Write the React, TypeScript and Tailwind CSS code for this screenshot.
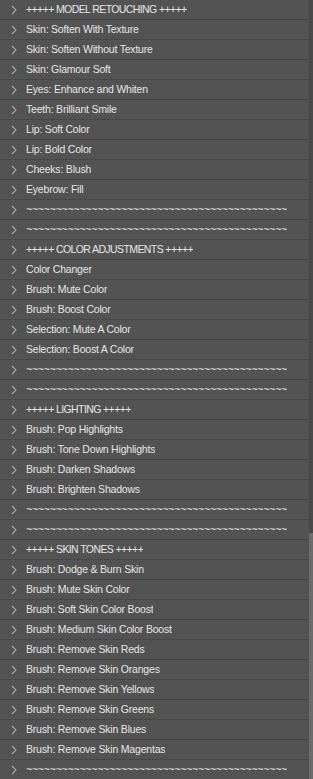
const TILDES = "~".repeat(44);

const rows: string[] = [
  "+++++ MODEL RETOUCHING +++++",
  "Skin: Soften With Texture",
  "Skin: Soften Without Texture",
  "Skin: Glamour Soft",
  "Eyes: Enhance and Whiten",
  "Teeth: Brilliant Smile",
  "Lip: Soft Color",
  "Lip: Bold Color",
  "Cheeks: Blush",
  "Eyebrow: Fill",
  TILDES,
  TILDES,
  "+++++ COLOR ADJUSTMENTS +++++",
  "Color Changer",
  "Brush: Mute Color",
  "Brush: Boost Color",
  "Selection: Mute A Color",
  "Selection: Boost A Color",
  TILDES,
  TILDES,
  "+++++ LIGHTING +++++",
  "Brush: Pop Highlights",
  "Brush: Tone Down Highlights",
  "Brush: Darken Shadows",
  "Brush: Brighten Shadows",
  TILDES,
  TILDES,
  "+++++ SKIN TONES +++++",
  "Brush: Dodge & Burn Skin",
  "Brush: Mute Skin Color",
  "Brush: Soft Skin Color Boost",
  "Brush: Medium Skin Color Boost",
  "Brush: Remove Skin Reds",
  "Brush: Remove Skin Oranges",
  "Brush: Remove Skin Yellows",
  "Brush: Remove Skin Greens",
  "Brush: Remove Skin Blues",
  "Brush: Remove Skin Magentas",
  TILDES,
];

function Chevron() {
  return (
    <svg width="6" height="10" viewBox="0 0 6 10" className="shrink-0">
      <path d="M1 1 L5 5 L1 9" fill="none" stroke="#a8a8a8" strokeWidth="1.1" />
    </svg>
  );
}

function ActionRow({ label }: { label: string }) {
  const isHeader = label.startsWith("+");
  return (
    <div className="flex h-[20px] items-center border-b border-[#474747]">
      <div className="flex w-[26px] shrink-0 justify-center pl-[1px]">
        <Chevron />
      </div>
      <span
        className={
          isHeader
            ? "overflow-hidden whitespace-nowrap text-[10.5px] leading-none tracking-[-0.6px] text-[#e6e6e6]"
            : "overflow-hidden whitespace-nowrap text-[10.5px] leading-none tracking-[-0.2px] text-[#e6e6e6]"
        }
      >
        {label}
      </span>
    </div>
  );
}

export default function App() {
  return (
    <div
      className="flex h-[779px] w-[313px] overflow-hidden bg-[#535353]"
      style={{ fontFamily: "'Liberation Sans', Arial, sans-serif" }}
    >
      <div className="min-w-0 flex-1 overflow-hidden">
        {rows.map((r, i) => (
          <ActionRow key={i} label={r} />
        ))}
      </div>
      <div className="flex w-[4px] flex-col bg-[#494949]">
        <div className="h-[533px]" />
        <div className="flex-1 bg-[#6b6b6b]" />
      </div>
    </div>
  );
}
